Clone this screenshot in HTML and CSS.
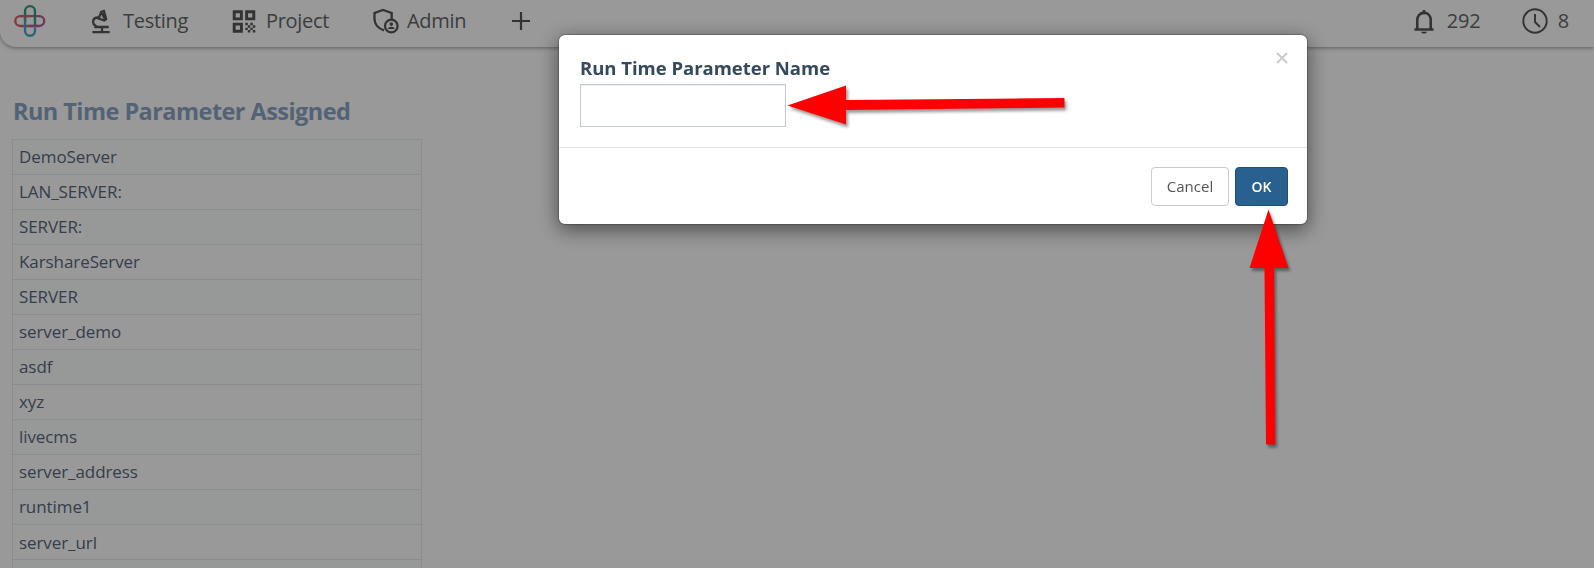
FILE: index.html
```html
<!DOCTYPE html>
<html lang="en">
<head>
<meta charset="utf-8">
<title>Run Time Parameter</title>
<link rel="stylesheet" href="styles.css">
</head>
<body>
<header class="topbar">
  <svg class="logo" viewBox="0 0 32 32" fill="none" stroke-width="2.3">
    <path d="M16 11.700H7a4.800 4.800 0 0 0 0 9.600h9" stroke="#d9626a"/>
    <path d="M16 11.700h9.500a4.800 4.800 0 0 1 0 9.600H16" stroke="#b0609f"/>
    <path d="M11.700 17V6.800a4.800 4.800 0 0 1 9.600 0V21" stroke="#2f9e80"/>
    <path d="M11.700 14v12a4.800 4.800 0 0 0 9.600 0v-3" stroke="#4aa5cc"/>
    <path d="M7 11.700h9" stroke="#d9626a"/>
    <path d="M15 21.300h9" stroke="#b0609f"/>
  </svg>
  <nav class="nav">
    <a class="item testing"><svg class="icon" viewBox="0 0 24 26" fill="none" stroke="#555" stroke-width="2.400"><path d="M2 24h18M4 18.700h15M12 18.700V24M7.500 18.700C3.500 17.500 2 14.500 3 11.500 4 9.300 6.500 8.500 9.500 9"/><path d="M8.500 10l2.700-7 2.800-1 2.300 8.500-1.800 1.500zM11.500 3.500l4 8"/></svg>Testing</a>
    <a class="item project"><svg class="icon" viewBox="0 0 24 24" fill="none" stroke="#555" stroke-width="2.900"><path d="M2.200 2.200h7.200v7.200H2.200zM14.600 2.200h7.200v7.200h-7.200zM2.200 14.600h7.200v7.200H2.200z"/><path d="M13.300 13.300h2.500v2.500h-2.500zM18.300 13.300h2.500v2.500h-2.500zM15.800 15.800h2.500v2.500h-2.500zM20.800 15.800h2.500v2.500h-2.500zM13.300 18.300h2.500v2.300h-2.500zM18.300 18.300h2.500v2.300h-2.500zM15.800 20.600h2.500v2.500h-2.500zM20.800 20.600h2.500v2.500h-2.500z" fill="#555" stroke="none"/></svg>Project</a>
    <a class="item admin"><svg class="icon wide" viewBox="0 0 26 26" fill="none" stroke="#555" stroke-width="2.300"><path d="M11 22.300C5 20.500 1.500 16 1.500 11V5L10 1.900 18.700 5v6"/><circle cx="18.300" cy="18" r="6.300"/><circle cx="18.300" cy="16.100" r="1.800" fill="#555" stroke="none"/><path d="M15 21.100c0-3 6.600-3 6.600 0z" fill="#555" stroke="none"/></svg>Admin</a>
    <svg class="plus" viewBox="0 0 18 18" stroke="#555" stroke-width="2.200"><path d="M9 0v18M0 9h18"/></svg>
  </nav>
  <div class="status">
    <span class="item bell"><svg class="icon" viewBox="0 0 22 26" fill="none" stroke="#555" stroke-width="2.700"><path d="M1 21.300h20M4 21V11.500C4 7 7 4 11 4s7 3 7 7.500V21M11 1v3"/><path d="M8 23.600h6c-.5 1.500-1.500 2-3 2s-2.500-.5-3-2z" fill="#555" stroke="none"/></svg>292</span>
    <span class="item clock"><svg class="icon wide" viewBox="0 0 26 26" fill="none" stroke="#555" stroke-width="1.900"><circle cx="13" cy="13" r="11.700"/><path d="M13 6v8l5 5"/></svg>8</span>
  </div>
</header>
<main class="content">
  <h2 class="title">Run Time Parameter Assigned</h2>
  <div class="table">
    <div class="row">DemoServer</div>
    <div class="row">LAN_SERVER:</div>
    <div class="row">SERVER:</div>
    <div class="row">KarshareServer</div>
    <div class="row">SERVER</div>
    <div class="row">server_demo</div>
    <div class="row">asdf</div>
    <div class="row">xyz</div>
    <div class="row">livecms</div>
    <div class="row">server_address</div>
    <div class="row">runtime1</div>
    <div class="row last">server_url</div>
    <div class="row"></div>
  </div>
</main>
<div class="backdrop">
  <section class="dialog">
    <div class="dialog-body">
      <div class="field">
        <label class="label" for="name">Run Time Parameter Name</label>
        <input class="input" id="name" type="text">
      </div>
      <svg class="close" viewBox="0 0 12 12" stroke="#ccc" stroke-width="2"><path d="M1 1l10 10M11 1L1 11"/></svg>
    </div>
    <div class="dialog-footer">
      <button class="btn cancel">Cancel</button>
      <button class="btn ok">OK</button>
    </div>
  </section>
</div>
<svg class="arrows" viewBox="0 0 1594 568" fill="#f00">
  <path d="M787.500 105.500L846 85.500v14.500L1064.500 98v9.500L846 110v14.500z"/>
  <path d="M1268.500 209.500L1288.500 268h-14.500L1275.200 444.500h-9.200L1264.500 268H1249.500z"/>
</svg>
</body>
</html>
```

FILE: styles.css
```css
* { box-sizing: border-box; }
body {
  margin: 0;
  height: 568px;
  overflow: hidden;
  background: #fff;
  font-family: "Open Sans", sans-serif;
}
.topbar {
  height: 47px;
  display: flex;
  align-items: flex-start;
  justify-content: space-between;
  padding: 0 25px 0 13px;
  background: #fff;
  border-bottom-left-radius: 16px;
  box-shadow: 0 1px 4px rgba(0, 0, 0, .4);
  font-size: 20px;
  font-weight: 400;
  letter-spacing: -.3px;
  line-height: 42px;
  color: #666;
}
.logo { width: 33px; height: 33px; margin-top: 4px; }
.nav { display: flex; flex: 1; align-items: center; height: 42px; padding-left: 44px; }
.item { display: flex; align-items: center; }
.icon { width: 24px; height: 25px; }
.wide { width: 26px; height: 26px; }
.testing { width: 142px; gap: 9px; }
.project { width: 141px; gap: 10px; }
.admin { width: 139px; gap: 8px; }
.plus { width: 18px; height: 18px; }
.status { display: flex; }
.bell { width: 109px; gap: 12px; }
.bell .icon { width: 22px; }
.clock { gap: 10px; }
.content { padding: 46.55px 12px 0; }
.title {
  margin: 0;
  height: 45px;
  padding-left: 1px;
  font-size: 23.500px;
  line-height: 34px;
  font-weight: 700;
  letter-spacing: -.55px;
  color: #8aa5c3;
}
.table { width: 410px; border: solid #e7ecf1; border-width: 1px 1px 0; }
.row {
  height: 35.09px;
  padding-left: 6px;
  border-bottom: 1px solid #e7ecf1;
  font-size: 17px;
  letter-spacing: -.08px;
  line-height: 34px;
  color: #5b6880;
}
.last { padding-top: 1px; }
.row:nth-child(odd) { background: #fbfffd; }
.backdrop { position: fixed; inset: 0; background: rgba(0, 0, 0, .4); padding: 34px 0 0 558px; }
.dialog {
  width: 750px;
  height: 191px;
  background: #fff;
  background-clip: padding-box;
  border: 1px solid rgba(0, 0, 0, .2);
  border-radius: 7px;
  box-shadow: 0 5px 20px rgba(0, 0, 0, .5);
}
.dialog-body {
  display: flex;
  justify-content: space-between;
  height: 113px;
  padding: 20px 19px 0 21px;
  border-bottom: 1px solid #e5e5e5;
}
.field { display: flex; flex-direction: column; }
.label {
  height: 29px;
  line-height: 26px;
  font-size: 18.500px;
  font-weight: 700;
  letter-spacing: -.02px;
  color: #34495e;
}
.input {
  width: 206px;
  height: 43px;
  border: 1px solid #c2cad8;
  outline: none;
  box-shadow: inset 0 1px 1px rgba(0, 0, 0, .075);
}
.close { width: 12px; height: 12px; margin: -3px 0 0; }
.dialog-footer { display: flex; justify-content: flex-end; gap: 6px; padding: 19px 19px 0; }
.btn {
  height: 39px;
  padding: 0 0 1px;
  border: 1px solid #ccc;
  border-radius: 4px;
  background: #fff;
  font: 15px "Open Sans", sans-serif;
  color: #555;
}
.cancel { width: 78px; }
.ok { width: 53px; background: #286090; border-color: #204d74; color: #fff; font-size: 14px; font-weight: 600; }
.arrows {
  position: fixed;
  inset: 0;
  width: 1594px;
  height: 568px;
  filter: drop-shadow(2px 3px 1.500px rgba(0, 0, 0, .4));
  pointer-events: none;
}
```
